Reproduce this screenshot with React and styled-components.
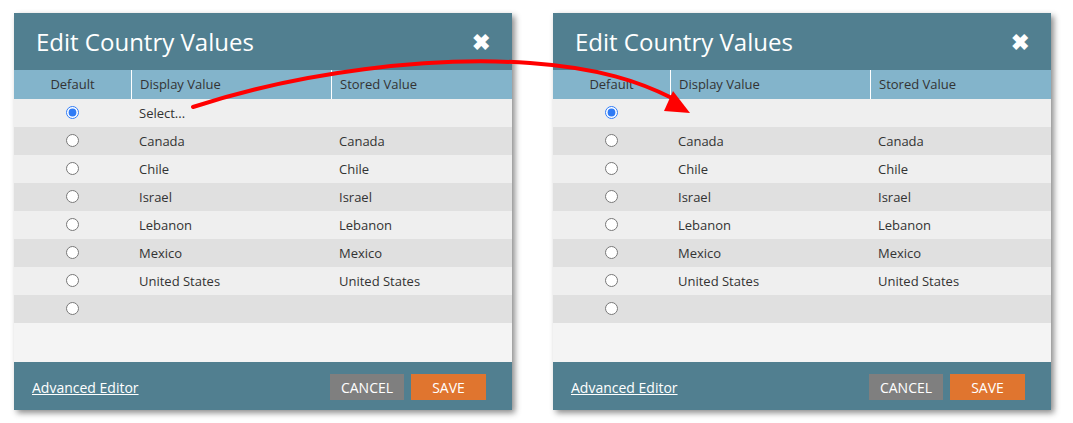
import React from 'react'
import styled, { createGlobalStyle } from 'styled-components'

const GlobalStyle = createGlobalStyle`
  html, body {
    margin: 0;
    padding: 0;
    background: #ffffff;
  }
  body {
    font-family: "Open Sans", "Liberation Sans", Arial, sans-serif;
  }
`

const Page = styled.div`
  position: relative;
  display: flex;
  gap: 41px;
  padding: 13px 0 0 14px;
  width: 1073px;
  height: 423px;
  box-sizing: border-box;
`

const Dialog = styled.div`
  width: 498px;
  height: 397px;
  display: flex;
  flex-direction: column;
  background: #f4f4f4;
  box-shadow: 3px 3px 6px rgba(0, 0, 0, 0.45);
`

const Header = styled.div`
  height: 57px;
  flex: none;
  display: flex;
  align-items: center;
  justify-content: space-between;
  padding: 0 22px 0 22px;
  background: #517f90;
  color: #fff;
`

const Title = styled.h1`
  margin: 0;
  font-size: 24px;
  font-weight: 400;
`

const Close = styled.span`
  font-size: 22px;
  font-weight: 700;
  line-height: 1;
  margin-top: -2px;
`

const Table = styled.div`
  flex: 1;
  display: flex;
  flex-direction: column;
`

const Row = styled.div`
  display: grid;
  grid-template-columns: 117px 200px 1fr;
  height: ${p => (p.head ? 29 : 28)}px;
  background: ${p => (p.head ? '#83b4cb' : p.odd ? '#e0e0e0' : '#efefef')};
  flex: none;
`

const HeadCell = styled.div`
  display: flex;
  align-items: center;
  justify-content: ${p => (p.center ? 'center' : 'flex-start')};
  padding-left: ${p => (p.center ? 0 : 8)}px;
  padding-bottom: 1px;
  border-left: ${p => (p.first ? 'none' : '1px solid #ffffff')};
  font-size: 13px;
  color: #333;
`

const Cell = styled.div`
  display: flex;
  align-items: center;
  justify-content: ${p => (p.center ? 'center' : 'flex-start')};
  padding-left: ${p => (p.center ? 0 : 8)}px;
  padding-bottom: 1px;
  font-size: 13px;
  color: #333;
`

const Radio = styled.input`
  margin: 0;
  width: 13px;
  height: 13px;
  accent-color: #2f7bf5;
`

const Footer = styled.div`
  height: 48px;
  flex: none;
  display: flex;
  align-items: center;
  padding: 0 26px 0 18px;
  background: #517f90;
`

const Link = styled.a`
  color: #fff;
  font-size: 14px;
  text-decoration: underline;
  margin-right: auto;
  margin-top: 3px;
  cursor: pointer;
`

const Button = styled.button`
  border: none;
  height: 26px;
  width: ${p => p.w}px;
  margin-left: ${p => p.ml || 0}px;
  background: ${p => (p.primary ? '#e0752f' : '#7f7f7f')};
  color: #fff;
  font-family: "Open Sans", "Liberation Sans", Arial, sans-serif;
  font-size: 14px;
  padding: 0;
  margin-top: 2px;
`

const Arrow = styled.svg`
  position: absolute;
  left: 0;
  top: 0;
  pointer-events: none;
`

const countries = ['Canada', 'Chile', 'Israel', 'Lebanon', 'Mexico', 'United States']

function EditDialog({ firstLabel }) {
  const rows = [{ display: firstLabel, stored: '', checked: true }]
    .concat(countries.map(c => ({ display: c, stored: c })))
    .concat([{ display: '', stored: '' }])

  return (
    <Dialog>
      <Header>
        <Title>Edit Country Values</Title>
        <Close>✖</Close>
      </Header>
      <Table>
        <Row head>
          <HeadCell first center>Default</HeadCell>
          <HeadCell>Display Value</HeadCell>
          <HeadCell>Stored Value</HeadCell>
        </Row>
        {rows.map((r, i) => (
          <Row key={i} odd={i % 2 === 1}>
            <Cell center>
              <Radio type="radio" readOnly checked={!!r.checked} />
            </Cell>
            <Cell>{r.display}</Cell>
            <Cell>{r.stored}</Cell>
          </Row>
        ))}
      </Table>
      <Footer>
        <Link>Advanced Editor</Link>
        <Button w={74}>CANCEL</Button>
        <Button primary w={75} ml={7}>SAVE</Button>
      </Footer>
    </Dialog>
  )
}

export default function App() {
  return (
    <Page>
      <GlobalStyle />
      <EditDialog firstLabel="Select..." />
      <EditDialog firstLabel="" />
      <Arrow width="1073" height="423" viewBox="0 0 1073 423">
        <path
          d="M193,107 C300,72 430,56 530,63 C600,68 640,82 672,98"
          fill="none"
          stroke="#ff0000"
          strokeWidth="4"
          strokeLinecap="round"
        />
        <polygon points="673,91 664,111 690,113" fill="#ff0000" />
      </Arrow>
    </Page>
  )
}
